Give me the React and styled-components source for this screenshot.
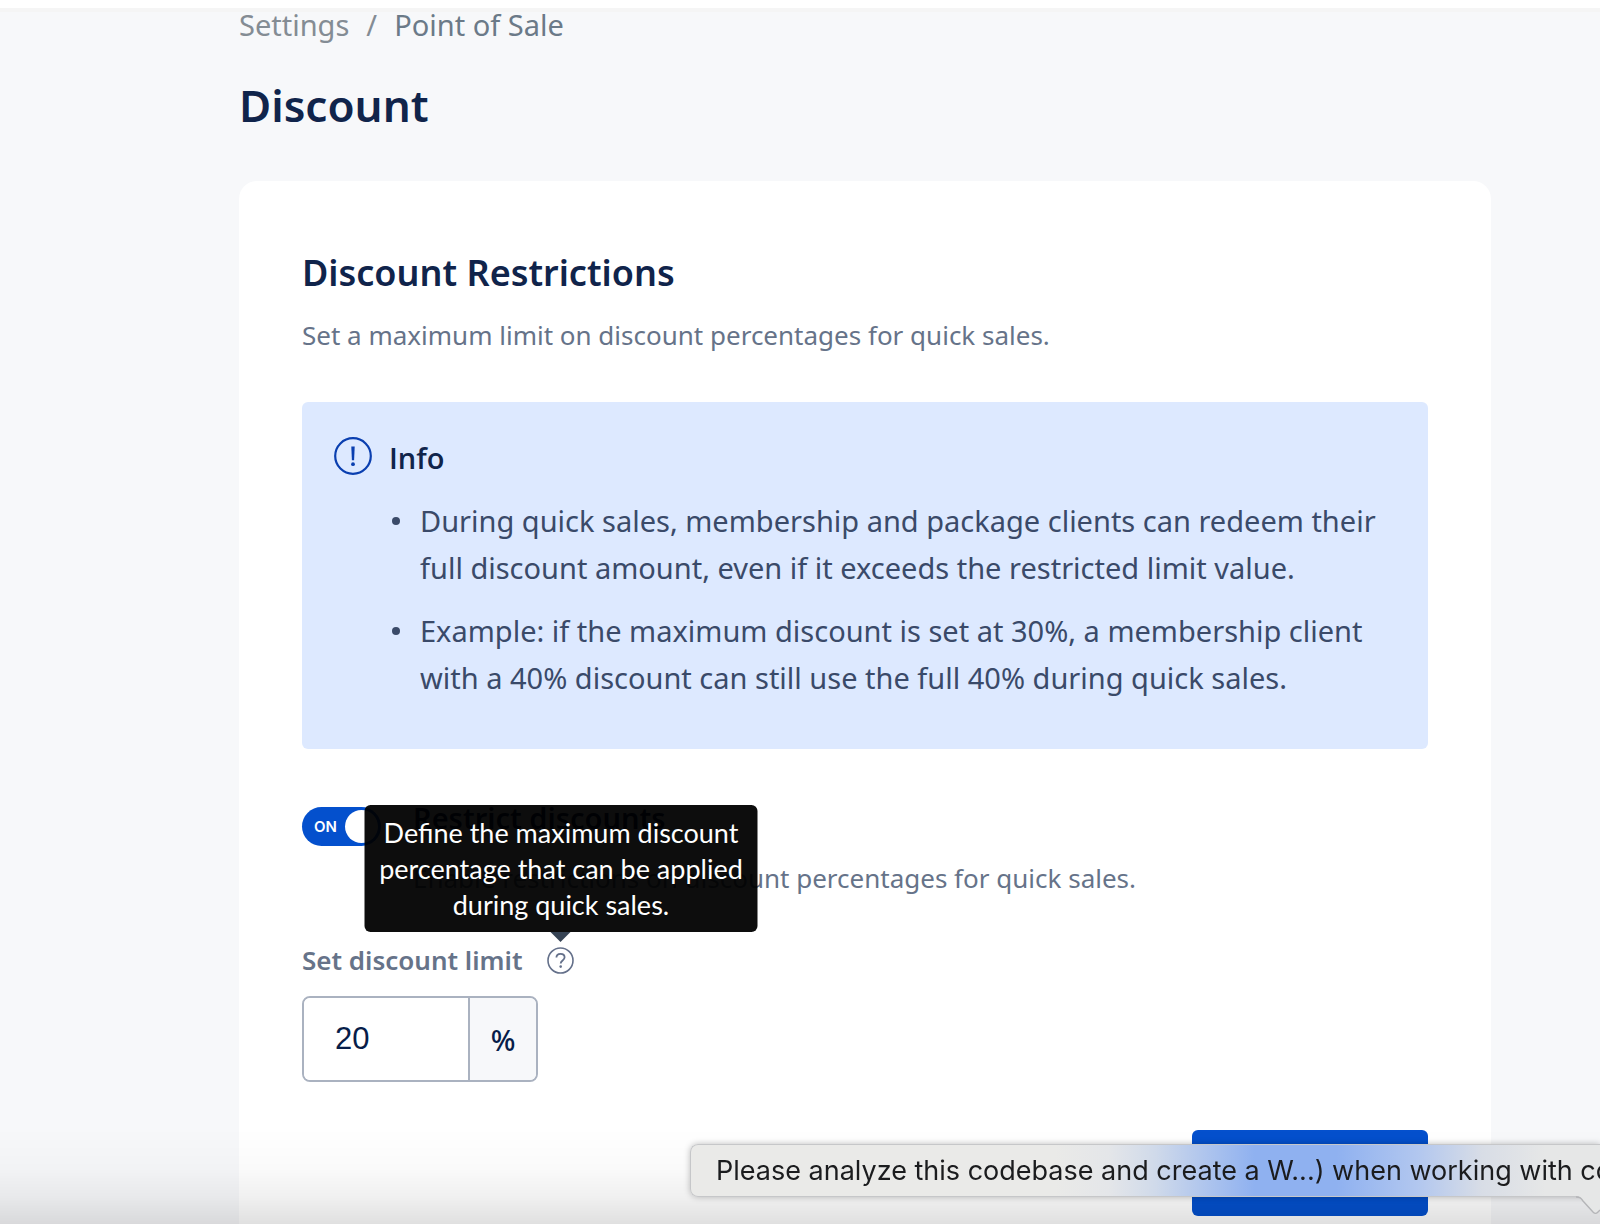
import { useState } from 'react';
import styled, { createGlobalStyle } from 'styled-components';

const App = () => {
  const [restricted, setRestricted] = useState(true);
  const [limit, setLimit] = useState('20');

  return (
    <>
      <GlobalStyle />
      <Page>
        <TopBar />
        <Content>
          <Breadcrumb aria-label="Breadcrumb">
            <a href="#settings">Settings</a>
            <span>/</span>
            <CurrentLink href="#pos">Point of Sale</CurrentLink>
          </Breadcrumb>
          <PageTitle>Discount</PageTitle>
          <Card>
            <SectionTitle>Discount Restrictions</SectionTitle>
            <Description>
              Set a maximum limit on discount percentages for quick sales.
            </Description>
            <InfoBox>
              <InfoIcon />
              <div>
                <InfoTitle>Info</InfoTitle>
                <InfoList>
                  <li>
                    During quick sales, membership and package clients can redeem
                    their full discount amount, even if it exceeds the restricted
                    limit value.
                  </li>
                  <li>
                    Example: if the maximum discount is set at 30%, a membership
                    client with a 40% discount can still use the full 40% during
                    quick sales.
                  </li>
                </InfoList>
              </div>
            </InfoBox>
            <SettingRow>
              <Toggle>
                <input
                  id="restrict"
                  type="checkbox"
                  checked={restricted}
                  onChange={(e) => setRestricted(e.target.checked)}
                />
                <span>{restricted ? 'ON' : 'OFF'}</span>
              </Toggle>
              <div>
                <SettingLabel htmlFor="restrict">Restrict discounts</SettingLabel>
                <Description>
                  Enable restrictions on discount percentages for quick sales.
                </Description>
              </div>
            </SettingRow>
            <LimitHeader>
              <label htmlFor="limit">Set discount limit</label>
              <Help>
                <HelpIcon />
                <Tooltip role="tooltip">
                  Define the maximum discount percentage that can be applied
                  during quick sales.
                </Tooltip>
              </Help>
            </LimitHeader>
            <LimitField>
              <input
                id="limit"
                type="text"
                value={limit}
                onChange={(e) => setLimit(e.target.value)}
              />
              <span>%</span>
            </LimitField>
            <SaveButton type="button" aria-label="Save" />
          </Card>
        </Content>
      </Page>
      <BottomShade />
      <Banner>
        <p>Please analyze this codebase and create a W...) when working with co</p>
        <BannerTail />
      </Banner>
    </>
  );
};

export default App;

const InfoIcon = () => (
  <InfoSvg viewBox="0 0 38 38" fill="none" stroke="#0a3fb0" aria-hidden="true">
    <circle cx="19" cy="19" r="17.8" strokeWidth="2.2" />
    <path d="M17.3 9.6h3.4l-.6 13.6h-2.2z" fill="#0a3fb0" stroke="none" />
    <circle cx="19" cy="27.2" r="1.9" fill="#0a3fb0" stroke="none" />
  </InfoSvg>
);

const HelpIcon = () => (
  <svg width="27" height="27" viewBox="0 0 27 27" fill="none" stroke="#64708a" aria-hidden="true">
    <circle cx="13.5" cy="13.5" r="12.5" strokeWidth="1.6" />
    <path
      d="M9.4 10.6c0-2.3 1.7-3.8 4.1-3.8s4.1 1.4 4.1 3.5c0 3.2-3.9 3.2-3.9 6.2"
      strokeWidth="1.8"
    />
    <circle cx="13.7" cy="19.6" r="1.3" fill="#64708a" stroke="none" />
  </svg>
);

const BannerTail = () => (
  <TailSvg viewBox="0 0 24 20" aria-hidden="true">
    <path d="M0 0C4 0 5 2 7 5l10 11c2 2 3 2 5 0l2-2V0z" fill="#e6e7e7" />
    <path
      d="M0 1C4 1 5 2 7 5l10 11c2 2 3 2 5 0l2-2"
      fill="none"
      stroke="#b4b5b8"
      strokeWidth="1.4"
    />
  </TailSvg>
);

const GlobalStyle = createGlobalStyle`
  *, *::before, *::after {
    box-sizing: border-box;
  }
  body {
    margin: 0;
    background: #f7f8fa;
    color: #10244b;
    font-family: 'Noto Sans', 'Open Sans', sans-serif;
  }
  h1, h2, h3, p, ul {
    margin: 0;
    padding: 0;
  }
  a {
    color: inherit;
    text-decoration: none;
  }
`;

const Page = styled.div`
  display: flex;
  flex-direction: column;
  min-height: 100vh;
`;

const TopBar = styled.header`
  height: 12px;
  background: #fff;
  border-bottom: 4px solid #f5f5f5;
`;

const Content = styled.main`
  display: flex;
  flex: 1;
  flex-direction: column;
  padding: 0 109px 0 239px;
`;

const Breadcrumb = styled.nav`
  display: flex;
  gap: 17px;
  margin-bottom: 37px;
  color: #848c94;
  font-size: 29px;
  line-height: 26px;
`;

const CurrentLink = styled.a`
  color: #6b7a88;
`;

const PageTitle = styled.h1`
  margin-bottom: 46px;
  font-size: 44px;
  font-weight: 600;
  line-height: 60px;
`;

const Card = styled.section`
  display: flex;
  flex: 1;
  flex-direction: column;
  padding: 63px 63px 0;
  background: #fff;
  border-radius: 18px 18px 0 0;
`;

const SectionTitle = styled.h2`
  margin-bottom: 12px;
  font-size: 36px;
  font-weight: 600;
  line-height: 58px;
`;

const Description = styled.p`
  color: #667389;
  font-size: 26px;
  line-height: 42px;
`;

const InfoBox = styled.div`
  display: flex;
  gap: 17px;
  margin-top: 46px;
  padding: 32px 24px 32px 32px;
  background: #dde9ff;
  border-radius: 6px;
`;

const InfoSvg = styled.svg`
  flex: none;
  width: 38px;
  height: 38px;
  margin-top: 3px;
`;

const InfoTitle = styled.h3`
  margin-bottom: 16px;
  font-family: 'Open Sans', sans-serif;
  font-size: 29px;
  font-weight: 600;
  line-height: 47px;
`;

const InfoList = styled.ul`
  color: #3a4a69;
  font-size: 29px;
  line-height: 47px;
  list-style: none;
  li {
    display: flex;
    margin-bottom: 16px;
  }
  li::before {
    content: '';
    flex: none;
    width: 8px;
    height: 8px;
    margin: 20px 20px 0 3px;
    background: #3a4a69;
    border-radius: 50%;
  }
`;

const SettingRow = styled.div`
  display: flex;
  gap: 32px;
  margin-top: 49px;
`;

const Toggle = styled.div`
  display: flex;
  flex: none;
  width: 79px;
  height: 39px;
  margin-top: 9px;
  input {
    appearance: none;
    display: flex;
    align-items: center;
    justify-content: flex-end;
    width: 79px;
    height: 39px;
    margin: 0;
    padding: 3px;
    background: #0450cd;
    border-radius: 20px;
    cursor: pointer;
  }
  input::after {
    content: '';
    width: 33px;
    height: 33px;
    background: #fff;
    border-radius: 50%;
  }
  input:not(:checked) {
    justify-content: flex-start;
    background: #8a94a6;
  }
  span {
    margin-left: -67px;
    color: #fff;
    font-family: Inter, sans-serif;
    font-size: 15px;
    font-weight: 600;
    line-height: 39px;
    pointer-events: none;
    z-index: 1;
  }
`;

const SettingLabel = styled.label`
  display: block;
  margin-bottom: 19px;
  font-size: 29px;
  font-weight: 600;
  line-height: 40px;
`;

const LimitHeader = styled.div`
  display: flex;
  align-items: center;
  gap: 25px;
  margin-top: 40px;
  color: #667389;
  font-size: 26px;
  font-weight: 600;
  line-height: 42px;
`;

const Help = styled.span`
  position: relative;
  display: flex;
`;

const Tooltip = styled.span`
  position: absolute;
  bottom: 42px;
  left: 50%;
  width: 393px;
  padding: 10px 14px 9px;
  transform: translateX(-50%);
  background: rgba(0, 0, 0, 0.95);
  border-radius: 6px;
  color: #fff;
  font-family: Lato, sans-serif;
  font-size: 27px;
  font-weight: 400;
  line-height: 36px;
  text-align: center;
  z-index: 2;
  &::after {
    content: '';
    position: absolute;
    top: 100%;
    left: 50%;
    margin-left: -10px;
    border: 10px solid transparent;
    border-top-color: #364354;
    border-bottom: 0;
  }
`;

const LimitField = styled.div`
  display: flex;
  width: 236px;
  height: 86px;
  margin-top: 15px;
  overflow: hidden;
  border: 2px solid #aab2c0;
  border-radius: 8px;
  input {
    flex: 1;
    min-width: 0;
    padding: 0 31px;
    background: #fff;
    border: 0;
    color: #071d49;
    font-family: 'Liberation Sans', sans-serif;
    font-size: 31px;
    outline: 0;
  }
  span {
    display: flex;
    align-items: center;
    justify-content: center;
    width: 68px;
    background: #f7f8fa;
    border-left: 2px solid #aab2c0;
    color: #071d49;
    font-size: 29px;
    font-weight: 500;
  }
`;

const SaveButton = styled.button`
  align-self: flex-end;
  width: 236px;
  height: 86px;
  margin-top: 48px;
  background: #0450cd;
  border: 0;
  border-radius: 6px;
`;

const BottomShade = styled.div`
  position: fixed;
  right: 0;
  bottom: 0;
  left: 0;
  height: 96px;
  background: linear-gradient(
    transparent,
    rgba(0, 0, 0, 0.02) 42%,
    rgba(0, 0, 0, 0.06) 72%,
    rgba(0, 0, 0, 0.12)
  );
  pointer-events: none;
`;

const Banner = styled.aside`
  position: fixed;
  right: 0;
  bottom: 27px;
  left: 690px;
  height: 53px;
  padding-left: 25px;
  background: linear-gradient(
    90deg,
    #eaeae8 40%,
    #e4e6e9 46%,
    #d0daea 51%,
    #b2c7ed 56%,
    #8fb1f0 62%,
    #8fb1f0 71%,
    #b2c7ef 80%,
    #d8dde6 87%,
    #e6e7e7 94%
  );
  border: 1px solid #c6c7c9;
  border-right: 0;
  border-radius: 8px 0 0 8px;
  box-shadow: 0 0 6px rgba(0, 0, 0, 0.25);
  p {
    overflow: hidden;
    color: #1b1c1e;
    font-family: Inter, sans-serif;
    font-size: 27px;
    line-height: 51px;
    white-space: nowrap;
  }
`;

const TailSvg = styled.svg`
  position: absolute;
  top: 51px;
  right: 0;
  width: 24px;
  height: 20px;
`;
